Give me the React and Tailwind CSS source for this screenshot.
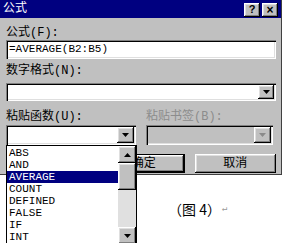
import React from 'react';

const raised =
  'shadow-[inset_-1px_-1px_0_#000,inset_1px_1px_0_#fff,inset_-2px_-2px_0_#808080,inset_2px_2px_0_#dfdfdf]';
const sunken =
  'shadow-[inset_1px_1px_0_#808080,inset_2px_2px_0_#000,inset_-1px_-1px_0_#fff,inset_-2px_-2px_0_#dfdfdf]';

const font = { fontFamily: '"Liberation Mono", "Noto Sans CJK SC", monospace' };

const ArrowBtn = ({ disabled = false, up = false, className = '' }) => (
  <div className={`flex items-center justify-center bg-[#c0c0c0] ${raised} ${className}`}>
    <svg width="7" height="4" viewBox="0 0 7 4">
      <path
        d={up ? 'M0 4 L7 4 L3.5 0 Z' : 'M0 0 L7 0 L3.5 4 Z'}
        fill={disabled ? '#8a8a8a' : '#000'}
      />
    </svg>
  </div>
);

const Label = ({ children, disabled = false, className = '' }) => (
  <div
    className={`h-[14px] text-[12px] leading-[14px] ${disabled ? 'text-[#8c8c8c]' : 'text-black'} ${className}`}
  >
    {children}
  </div>
);

const functions = ['ABS', 'AND', 'AVERAGE', 'COUNT', 'DEFINED', 'FALSE', 'IF', 'INT'];

export default function App() {
  return (
    <div className="relative w-[284px] h-[243px] overflow-hidden bg-white" style={font}>
      {/* Dialog */}
      <div className="w-[282px] h-[175px] bg-[#c0c0c0] border-r border-b border-[#404040]">
        {/* Title bar */}
        <div className="flex h-[18px] items-center justify-between bg-[#000080] pl-[3px] pr-[3px]">
          <span className="text-[12px] leading-[14px] text-white">公式</span>
          <div className="flex gap-[2px] pt-[1px]">
            <div className={`flex h-[14px] w-[16px] items-center justify-center bg-[#c0c0c0] ${raised}`}>
              <span className="text-[11px] font-bold leading-none text-black" style={{ fontFamily: '"Liberation Sans", sans-serif' }}>?</span>
            </div>
            <div className={`flex h-[14px] w-[16px] items-center justify-center bg-[#c0c0c0] ${raised}`}>
              <span className="text-[12px] font-bold leading-none text-black" style={{ fontFamily: '"Liberation Sans", sans-serif' }}>×</span>
            </div>
          </div>
        </div>

        <div className="pl-[6px] pr-[5px]">
          <Label className="mt-[8px]">公式(F):</Label>
          <div className={`mt-[0px] flex h-[19px] items-center bg-white pl-[3px] ${sunken}`}>
            <span className="text-[11px] leading-none text-black">=AVERAGE(B2:B5)</span>
          </div>

          <Label className="mt-[5px]">数字格式(N):</Label>
          <div className={`mt-[5px] flex h-[18px] w-[270px] justify-end bg-white p-[2px] ${sunken}`}>
            <ArrowBtn className="h-[14px] w-[16px]" />
          </div>

          <div className="mt-[9px] flex gap-[10px]">
            <div className="w-[130px]">
              <Label>粘贴函数(U):</Label>
              <div className={`mt-[1px] flex h-[20px] justify-end bg-white p-[2px] ${sunken}`}>
                <ArrowBtn className="h-[16px] w-[17px]" />
              </div>
            </div>
            <div className="w-[127px]">
              <Label disabled>粘贴书签(B):</Label>
              <div className={`mt-[1px] flex h-[20px] justify-end bg-[#c0c0c0] p-[2px] ${sunken}`}>
                <ArrowBtn disabled className="h-[16px] w-[17px]" />
              </div>
            </div>
          </div>

          <div className="mt-[9px] flex gap-[10px] pl-[97px]">
            <div className="flex h-[19px] w-[82px] items-center justify-center border border-black bg-[#c0c0c0]">
              <div className={`flex h-full w-full items-center justify-center ${raised}`}>
                <span className="text-[12px] leading-none">确定</span>
              </div>
            </div>
            <div className={`flex h-[19px] w-[82px] items-center justify-center bg-[#c0c0c0] ${raised}`}>
              <span className="text-[12px] leading-none">取消</span>
            </div>
          </div>
        </div>
      </div>

      {/* Caption */}
      <div className="mt-[27px] flex items-center pl-[168px]">
        <span className="text-[14px] leading-none text-black" style={{ fontFamily: '"Noto Sans CJK SC", sans-serif' }}>（图 4）</span>
        <span className="ml-[1px] text-[9px] leading-none text-[#999]">↵</span>
      </div>

      {/* Open dropdown list */}
      <div className="absolute left-[6px] top-[145px] flex h-[100px] w-[131px] border border-black bg-white">
        <div className="flex-1 pt-[1px]">
          {functions.map((f) => (
            <div
              key={f}
              className={`h-[12px] pl-[2px] text-[11px] leading-[12px] ${
                f === 'AVERAGE' ? 'bg-[#000080] text-white' : 'text-black'
              }`}
            >
              {f}
            </div>
          ))}
        </div>
        <div className="flex w-[18px] flex-col bg-[#e0e0e0]">
          <ArrowBtn up className="h-[17px] w-[18px]" />
          <div className={`h-[27px] w-[18px] bg-[#c0c0c0] ${raised}`} />
          <div className="flex-1" />
          <ArrowBtn className="h-[17px] w-[18px]" />
        </div>
      </div>
    </div>
  );
}
